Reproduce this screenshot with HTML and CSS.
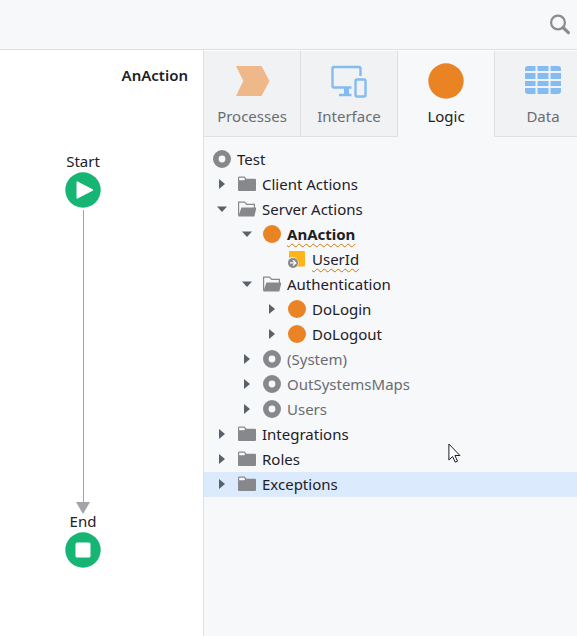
FILE: index.html
```html
<!DOCTYPE html>
<html lang="en">
<head>
<meta charset="utf-8">
<title>AnAction</title>
<link rel="stylesheet" href="styles.css">
</head>
<body>
<svg class="defs" aria-hidden="true">
  <symbol id="closed" viewBox="0 0 18 18"><path d="M6 4l6 5-6 5z" fill="#59626b"/></symbol>
  <symbol id="opened" viewBox="0 0 18 18"><path d="M4 6.500h10l-5 5.500z" fill="#59626b"/></symbol>
  <symbol id="folder" viewBox="0 0 18 18"><path d="M0 3Q0 1.500 1 1.500h5.500l2 2.200H17q1 0 1 1V15q0 1-1 1H1q-1 0-1-1z" fill="#87888c"/><path d="M1.200 5.200V2.800h4.700l1.300 1.500-1 .9z" fill="#f7f8fa"/></symbol>
  <symbol id="folder-open" viewBox="0 0 18 18"><path d="M.6 15.500V2.100h6l2 2.200h7.800V8" fill="none" stroke="#87888c" stroke-width="1.200"/><path d="M3.400 7.500H18.500l-2.200 9H.3z" fill="#87888c"/></symbol>
  <symbol id="ring" viewBox="0 0 18 18"><circle cx="9" cy="9" r="6.200" fill="none" stroke="#87888c" stroke-width="5.600"/></symbol>
  <symbol id="dot" viewBox="0 0 18 18"><circle cx="9" cy="9" r="9" fill="#e98323"/></symbol>
  <symbol id="input" viewBox="0 0 18 18"><rect x="1" y="1" width="16" height="15.500" rx="1" fill="#ffb51a"/><circle cx="4.500" cy="12.900" r="6" fill="#f7f8fa"/><circle cx="5" cy="12.900" r="5" fill="#87888c"/><path d="M2 12.900h5.500M5 10.200l2.800 2.700L5 15.600" fill="none" stroke="#fff" stroke-width="1.300"/></symbol>
</svg>

<header class="topbar">
  <button class="search" type="button" aria-label="Search">
    <svg viewBox="0 0 22 22"><circle cx="9" cy="8.500" r="6.900" fill="none" stroke="#8b8c90" stroke-width="2.200"/><path d="M14 13.500l5.400 5.200" stroke="#8b8c90" stroke-width="3.200" stroke-linecap="round"/></svg>
  </button>
</header>

<div class="workspace">
  <main class="canvas">
    <h1 class="title">AnAction</h1>
    <div class="flow">
      <span class="node-label">Start</span>
      <svg class="node" viewBox="0 0 36 36"><circle cx="18" cy="18" r="17.700" fill="#16b574"/><path d="M12 9.700l16 8.300-16 8.300z" fill="#fff" stroke="#fff" stroke-linejoin="round"/></svg>
      <div class="connector"></div>
      <span class="node-label">End</span>
      <svg class="node" viewBox="0 0 36 36"><circle cx="18" cy="18" r="17.700" fill="#16b574"/><rect x="10.500" y="10.500" width="15" height="15" rx="1.500" fill="#fff"/></svg>
    </div>
  </main>

  <aside class="panel">
    <nav class="tabs">
      <button class="tab" type="button">
        <svg viewBox="0 0 36 36"><path d="M2 3h25.500l8 15-8 15H2l7.300-15z" fill="#eeb88a"/></svg>
        <span>Processes</span>
      </button>
      <button class="tab" type="button">
        <svg viewBox="0 0 36 36"><path d="M20.500 24.500H3q-1.500 0-1.500-1.500V5.500Q1.500 4 3 4h25q1.500 0 1.500 1.500V13M8 32h12.500" fill="none" stroke="#84bbf3" stroke-width="2.400"/><path d="M13 25h5v7h-5z" fill="#84bbf3"/><rect x="24.500" y="16.500" width="10" height="17" rx="1.500" fill="none" stroke="#84bbf3" stroke-width="2.400"/></svg>
        <span>Interface</span>
      </button>
      <button class="tab active" type="button" aria-current="page">
        <svg viewBox="0 0 36 36"><circle cx="18" cy="18" r="17.700" fill="#e98323"/></svg>
        <span>Logic</span>
      </button>
      <button class="tab" type="button">
        <svg viewBox="0 0 36 36" fill="#84bbf3"><path d="M0 8V6q0-3 3-3h7.500v5zM12.500 3h11v5h-11zM25.500 3H33q3 0 3 3v2H25.500zM0 10h10.500v6H0zM12.500 10h11v6h-11zM25.500 10H36v6H25.500zM0 18h10.500v5H0zM12.500 18h11v5h-11zM25.500 18H36v5H25.500zM0 25h10.500v6H3q-3 0-3-3zM12.500 25h11v6h-11zM25.500 25H36v3q0 3-3 3h-7.500z"/></svg>
        <span>Data</span>
      </button>
    </nav>

    <ul class="tree">
      <li class="row root"><svg class="icon"><use href="#ring"/></svg><span>Test</span></li>
      <li class="row"><svg class="arrow"><use href="#closed"/></svg><svg class="icon"><use href="#folder"/></svg><span>Client Actions</span></li>
      <li class="row"><svg class="arrow"><use href="#opened"/></svg><svg class="icon"><use href="#folder-open"/></svg><span>Server Actions</span></li>
      <li class="row level-2"><svg class="arrow"><use href="#opened"/></svg><svg class="icon"><use href="#dot"/></svg><strong class="warn">AnAction</strong></li>
      <li class="row level-3"><span class="arrow"></span><svg class="icon"><use href="#input"/></svg><span class="warn">UserId</span></li>
      <li class="row level-2"><svg class="arrow"><use href="#opened"/></svg><svg class="icon"><use href="#folder-open"/></svg><span>Authentication</span></li>
      <li class="row level-3"><svg class="arrow"><use href="#closed"/></svg><svg class="icon"><use href="#dot"/></svg><span>DoLogin</span></li>
      <li class="row level-3"><svg class="arrow"><use href="#closed"/></svg><svg class="icon"><use href="#dot"/></svg><span>DoLogout</span></li>
      <li class="row level-2 muted"><svg class="arrow"><use href="#closed"/></svg><svg class="icon"><use href="#ring"/></svg><span>(System)</span></li>
      <li class="row level-2 muted"><svg class="arrow"><use href="#closed"/></svg><svg class="icon"><use href="#ring"/></svg><span>OutSystemsMaps</span></li>
      <li class="row level-2 muted"><svg class="arrow"><use href="#closed"/></svg><svg class="icon"><use href="#ring"/></svg><span>Users</span></li>
      <li class="row"><svg class="arrow"><use href="#closed"/></svg><svg class="icon"><use href="#folder"/></svg><span>Integrations</span></li>
      <li class="row"><svg class="arrow"><use href="#closed"/></svg><svg class="icon"><use href="#folder"/></svg><span>Roles</span></li>
      <li class="row selected"><svg class="arrow"><use href="#closed"/></svg><svg class="icon"><use href="#folder"/></svg><span>Exceptions</span></li>
    </ul>
    <svg class="pointer" viewBox="0 0 13 20" aria-hidden="true"><path d="M.9 1v16l3.700-3.500 2.600 5.700 2.300-1-2.600-5.700h5z" fill="#fff" stroke="#1b1d2a"/></svg>
  </aside>
</div>
</body>
</html>
```
FILE: styles.css
```css
* {
  box-sizing: border-box;
}

body {
  margin: 0;
  min-height: 100vh;
  display: flex;
  flex-direction: column;
  background: #f7f8fa;
  color: #1d2027;
  font: 15px/20px "Noto Sans", sans-serif;
}

button {
  border: 0;
  padding: 0;
  background: none;
  font: inherit;
  color: inherit;
}

.defs {
  display: none;
}

.topbar {
  height: 50px;
  padding: 0 6px;
  display: flex;
  align-items: center;
  justify-content: flex-end;
  border-bottom: 1px solid #dedfe3;
}

.search svg {
  display: block;
  width: 22px;
  height: 22px;
}

.workspace {
  flex: 1;
  display: flex;
}

.canvas {
  flex: none;
  width: 204px;
  border-right: 1px solid #dedfe3;
  background: #fff;
}

.title {
  margin: 0;
  padding: 15px 15px 0 0;
  text-align: right;
  font-size: 15px;
  line-height: 20px;
  font-weight: 600;
}

.flow {
  width: 36px;
  margin: 69px 0 0 65px;
  display: flex;
  flex-direction: column;
  align-items: center;
}

.node-label {
  line-height: 14px;
  margin-bottom: 4px;
}

.node {
  width: 36px;
  height: 36px;
}

.connector {
  width: 14px;
  height: 304px;
  margin-top: 2px;
  display: flex;
  flex-direction: column;
  align-items: center;
}

.connector::before {
  content: "";
  flex: 1;
  border-left: 1px solid #a3a4a8;
}

.connector::after {
  content: "";
  border: 7px solid transparent;
  border-top: 12px solid #a3a4a8;
  border-bottom: 0;
}

.panel {
  position: relative;
  flex: 1;
  min-width: 0;
  overflow: hidden;
  border-top: 1px solid #fff;
}

.tabs {
  display: flex;
}

.tab {
  flex: none;
  width: 97px;
  height: 86px;
  padding-top: 2px;
  display: flex;
  flex-direction: column;
  align-items: center;
  justify-content: center;
  gap: 7px;
  border-right: 1px solid #dedfe3;
  border-bottom: 1px solid #dedfe3;
  background: #f1f2f4;
  color: #6a6c72;
}

.tab svg {
  width: 36px;
  height: 36px;
}

.tab.active {
  border-bottom-color: transparent;
  background: none;
  color: #1d2027;
}

.tree {
  list-style: none;
  margin: 0;
  padding: 10px 0;
}

.row {
  height: 25px;
  padding: 0 0 1px 9px;
  display: flex;
  align-items: center;
}

.level-2 {
  padding-left: 34px;
}

.level-3 {
  padding-left: 59px;
}

.arrow,
.icon {
  flex: none;
  width: 18px;
  height: 18px;
  margin-right: 7px;
}

.icon {
  margin-right: 6px;
}

.muted {
  color: #6a6c72;
}

.selected {
  background: #dceafd;
}

.warn {
  text-decoration: underline wavy #c97a08 1px;
  text-underline-offset: 3px;
}

.pointer {
  position: absolute;
  left: 244px;
  top: 392px;
  width: 13px;
  height: 20px;
}
```
